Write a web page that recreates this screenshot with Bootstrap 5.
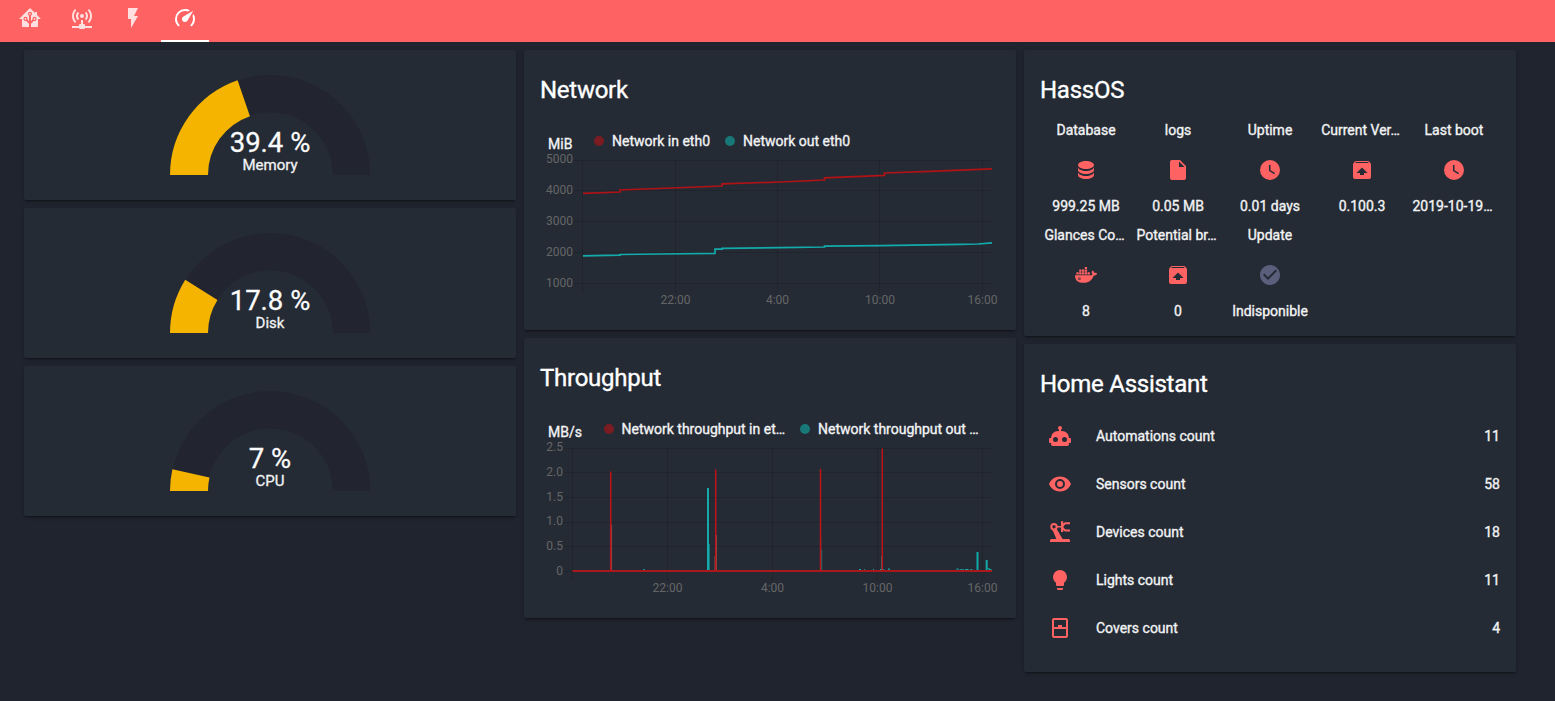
<!DOCTYPE html>
<html lang="en">
<head>
<meta charset="utf-8">
<meta name="viewport" content="width=device-width, initial-scale=1">
<title>System monitor</title>
<link href="https://cdn.jsdelivr.net/npm/bootstrap@5.3.0/dist/css/bootstrap.min.css" rel="stylesheet">
<style>
body{background:#20242f;color:#f2f3f4;font:400 14px/20px Roboto,"Noto Sans",sans-serif;min-height:701px;-webkit-text-stroke:.35px currentColor}
.topbar{height:42px;background:#ff6262;padding-left:4.4px}
.tab{width:51.65px;height:42px;color:#fff;padding:6px 1.5px 0}
.tab svg{opacity:.8}
.tab.active svg{opacity:1}
.tab .bar{height:2px;width:100%;background:transparent}
.tab.active .bar{background:#fff}
svg{display:block;fill:currentColor}
.views{padding:8px 39px 0 24px}
.colm{width:492px}
.panel{background:#252b35;border-radius:2px;box-shadow:0 2px 2px rgba(0,0,0,.14),0 1px 5px rgba(0,0,0,.12),0 3px 1px -2px rgba(0,0,0,.2)}
.panel h2{font-size:24px;line-height:40px;font-weight:400;margin:0;padding:20px 16px 0;color:#fff;letter-spacing:-.26px}
.gauge-panel{height:150px;padding-top:25px}
.gauge-panel text{stroke:currentColor;stroke-width:.3px;-webkit-text-stroke:0}
.chart-panel{height:280px}
.chart-panel svg text{font-size:12px;fill:#666;stroke:none;-webkit-text-stroke:0}
.legend-row{height:20px;margin-top:21px;padding-left:24px}
.legend-row .unit{position:relative;top:3px}
.dot{width:10px;height:10px;border-radius:50%}
.tile{width:92px}
.tile svg{margin:10px auto 6px}
.cut{padding-right:3px}
.accent{color:#ff6262}
.off{color:#5c5f7b}
.entity{height:48px;padding-left:8px}
.grid-line{stroke:#000;stroke-opacity:.15;stroke-width:1}
</style>
</head>
<body>
<svg width="0" height="0" class="position-absolute" aria-hidden="true">
<symbol id="clock" viewBox="0 0 24 24"><path d="M12,2A10,10 0 0,0 2,12A10,10 0 0,0 12,22A10,10 0 0,0 22,12A10,10 0 0,0 12,2M16.2,16.2L11,13V7H12.5V12.2L17,14.9L16.2,16.2Z"/></symbol>
<symbol id="package" viewBox="0 0 24 24"><path d="M20.54,5.23C20.83,5.57 21,6 21,6.5V19A2,2 0 0,1 19,21H5A2,2 0 0,1 3,19V6.5C3,6 3.17,5.57 3.46,5.23L4.84,3.55C5.12,3.21 5.53,3 6,3H18C18.47,3 18.88,3.21 19.15,3.55L20.54,5.23M5.12,5H18.87L17.93,4H5.93L5.12,5M12,9.5L6.5,15H10V17H14V15H17.5L12,9.5Z"/></symbol>
</svg>

<nav class="topbar d-flex">
  <div class="tab d-flex flex-column align-items-center justify-content-between"><svg width="24" height="24" viewBox="0 0 24 24"><path d="M21.8,13H20V21H13V17.67L15.79,14.88L16.5,15C17.66,15 18.6,14.06 18.6,12.9C18.6,11.74 17.66,10.8 16.5,10.8A2.1,2.1 0 0,0 14.4,12.9L14.5,13.61L13,15.13V9.65C13.66,9.29 14.1,8.6 14.1,7.8A2.1,2.1 0 0,0 12,5.7A2.1,2.1 0 0,0 9.9,7.8C9.9,8.6 10.34,9.29 11,9.65V15.13L9.5,13.61L9.6,12.9A2.1,2.1 0 0,0 7.5,10.8A2.1,2.1 0 0,0 5.4,12.9A2.1,2.1 0 0,0 7.5,15L8.21,14.88L11,17.67V21H4V13H2.25C1.83,13 1.42,13 1.42,12.79C1.43,12.57 1.85,12.15 2.28,11.72L11,3C11.33,2.67 11.67,2.33 12,2.33C12.33,2.33 12.67,2.67 13,3L17,7V6H19V9L21.78,11.78C22.18,12.18 22.59,12.59 22.6,12.8C22.6,13 22.2,13 21.8,13M7.5,12A0.9,0.9 0 0,1 8.4,12.9A0.9,0.9 0 0,1 7.5,13.8A0.9,0.9 0 0,1 6.6,12.9A0.9,0.9 0 0,1 7.5,12M16.5,12C17,12 17.4,12.4 17.4,12.9C17.4,13.4 17,13.8 16.5,13.8A0.9,0.9 0 0,1 15.6,12.9A0.9,0.9 0 0,1 16.5,12M12,6.9C12.5,6.9 12.9,7.3 12.9,7.8C12.9,8.3 12.5,8.7 12,8.7C11.5,8.7 11.1,8.3 11.1,7.8C11.1,7.3 11.5,6.9 12,6.9Z"/></svg><span class="bar"></span></div>
  <div class="tab d-flex flex-column align-items-center justify-content-between"><svg width="24" height="24" viewBox="0 0 24 24"><path d="M4.93,2.93C3.12,4.74 2,7.24 2,10C2,12.76 3.12,15.26 4.93,17.07L6.34,15.66C4.89,14.22 4,12.22 4,10C4,7.79 4.89,5.78 6.34,4.34L4.93,2.93M19.07,2.93L17.66,4.34C19.11,5.78 20,7.79 20,10C20,12.22 19.11,14.22 17.66,15.66L19.07,17.07C20.88,15.26 22,12.76 22,10C22,7.24 20.88,4.74 19.07,2.93M7.76,5.76C6.67,6.85 6,8.35 6,10C6,11.65 6.67,13.15 7.76,14.24L9.17,12.83C8.45,12.11 8,11.11 8,10C8,8.89 8.45,7.89 9.17,7.17L7.76,5.76M16.24,5.76L14.83,7.17C15.55,7.89 16,8.89 16,10C16,11.11 15.55,12.11 14.83,12.83L16.24,14.24C17.33,13.15 18,11.65 18,10C18,8.35 17.33,6.85 16.24,5.76M12,8A2,2 0 0,0 10,10A2,2 0 0,0 12,12A2,2 0 0,0 14,10A2,2 0 0,0 12,8M11,14V18H10A1,1 0 0,0 9,19V20H2V22H9A1,1 0 0,0 10,23H14A1,1 0 0,0 15,22H22V20H15V19A1,1 0 0,0 14,18H13V14H11Z"/></svg><span class="bar"></span></div>
  <div class="tab d-flex flex-column align-items-center justify-content-between"><svg width="24" height="24" viewBox="0 0 24 24"><path d="M7,2V13H10V22L17,10H13L17,2H7Z"/></svg><span class="bar"></span></div>
  <div class="tab active d-flex flex-column align-items-center justify-content-between"><svg width="24" height="24" viewBox="0 0 24 24"><path d="M12,16A3,3 0 0,1 9,13C9,11.88 9.61,10.9 10.5,10.39L20.21,4.77L14.68,14.35C14.18,15.33 13.17,16 12,16M12,3C13.81,3 15.5,3.5 16.97,4.32L14.87,5.53C14,5.19 13,5 12,5A8,8 0 0,0 4,13C4,15.21 4.89,17.21 6.34,18.65H6.35C6.74,19.04 6.74,19.67 6.35,20.06C5.96,20.45 5.32,20.45 4.93,20.07V20.07C3.12,18.26 2,15.76 2,13A10,10 0 0,1 12,3M22,13C22,15.76 20.88,18.26 19.07,20.07V20.07C18.68,20.45 18.05,20.45 17.66,20.06C17.27,19.67 17.27,19.04 17.66,18.65V18.65C19.11,17.2 20,15.21 20,13C20,12 19.81,11 19.46,10.1L20.67,8C21.5,9.5 22,11.18 22,13Z"/></svg><span class="bar"></span></div>
</nav>

<main class="views d-flex gap-2 align-items-start">
  <section class="colm d-flex flex-column gap-2">
    <div class="panel gauge-panel">
      <svg class="mx-auto" width="200" height="110" viewBox="0 0 200 110" text-anchor="middle">
        <path d="M19 100A81 81 0 0 1 181.5 100" fill="none" stroke="#22252f" stroke-width="37.5"/>
        <path d="M19 100A81.25 81.25 0 0 1 181.5 100" fill="none" stroke="#f4b400" stroke-width="38" pathLength="100" stroke-dasharray="39.4 200"/>
        <text x="100" y="77" font-size="27.5" fill="#fff">39.4 %</text><text x="100" y="95" font-size="15">Memory</text>
      </svg>
    </div>
    <div class="panel gauge-panel">
      <svg class="mx-auto" width="200" height="110" viewBox="0 0 200 110" text-anchor="middle">
        <path d="M19 100A81 81 0 0 1 181.5 100" fill="none" stroke="#22252f" stroke-width="37.5"/>
        <path d="M19 100A81.25 81.25 0 0 1 181.5 100" fill="none" stroke="#f4b400" stroke-width="38" pathLength="100" stroke-dasharray="17.8 200"/>
        <text x="100" y="77" font-size="27.5" fill="#fff">17.8 %</text><text x="100" y="95" font-size="15">Disk</text>
      </svg>
    </div>
    <div class="panel gauge-panel">
      <svg class="mx-auto" width="200" height="110" viewBox="0 0 200 110" text-anchor="middle">
        <path d="M19 100A81 81 0 0 1 181.5 100" fill="none" stroke="#22252f" stroke-width="37.5"/>
        <path d="M19 100A81.25 81.25 0 0 1 181.5 100" fill="none" stroke="#f4b400" stroke-width="38" pathLength="100" stroke-dasharray="7 200"/>
        <text x="100" y="77" font-size="27.5" fill="#fff">7 %</text><text x="100" y="95" font-size="15">CPU</text>
      </svg>
    </div>
  </section>

  <section class="colm d-flex flex-column gap-2">
    <div class="panel chart-panel">
      <h2>Network</h2>
      <div class="legend-row d-flex align-items-center">
        <span class="unit" style="width:46px">MiB</span>
        <span class="dot" style="background:#7b1c22"></span><span style="width:113px;padding-left:8px;margin-right:8px">Network in eth0</span>
        <span class="dot" style="background:#187878"></span><span style="padding-left:8px">Network out eth0</span>
      </div>
      <svg width="492" height="179" viewBox="524 151 492 179">
        <path class="grid-line" fill="none" d="M573 160.5H992M573 190.5H992M573 221.5H992M573 252.5H992M573 283.5H992M582.5 160V293M675.5 160V293M777.5 160V293M879.5 160V293M982.5 160V293"/>
        <g text-anchor="end"><text x="573" y="163">5000</text><text x="573" y="194">4000</text><text x="573" y="225">3000</text><text x="573" y="256">2000</text><text x="573" y="287">1000</text></g>
        <g text-anchor="middle"><text x="675.5" y="304">22:00</text><text x="777.5" y="304">4:00</text><text x="880" y="304">10:00</text><text x="982.5" y="304">16:00</text></g>
        <g fill="none" stroke-width="1.7">
          <path stroke="#b01216" d="M583 193.3L620 192V190L722 186V183.8L780 182L824.5 180V177.8L884.5 175.4V173L930 171.3L992 168.8"/>
          <path stroke="#13aaaa" d="M583 255.8L620 255.2V254.5L660 254L715 253.4V249.2H722V248.3L780 247.6L824.5 247V246.2L880 245.6L960 244.4L978 244L992 242.9"/>
        </g>
      </svg>
    </div>
    <div class="panel chart-panel">
      <h2>Throughput</h2>
      <div class="legend-row d-flex align-items-center">
        <span class="unit" style="width:56px">MB/s</span>
        <span class="dot" style="background:#7b1c22"></span><span style="width:178px;padding-left:7.5px;margin-right:8px">Network throughput in et…</span>
        <span class="dot" style="background:#187878"></span><span style="padding-left:8px">Network throughput out …</span>
      </div>
      <svg width="492" height="179" viewBox="524 439 492 179">
        <path class="grid-line" fill="none" d="M563 448.5H992M563 472.5H992M563 497.5H992M563 522.5H992M563 546.5H992M563 571.5H992M572.5 448V581M667.5 448V581M772.5 448V581M877.5 448V581M982.5 448V581"/>
        <g text-anchor="end"><text x="563" y="451">2.5</text><text x="563" y="476">2.0</text><text x="563" y="501">1.5</text><text x="563" y="525">1.0</text><text x="563" y="550">0.5</text><text x="563" y="575">0</text></g>
        <g text-anchor="middle"><text x="667.5" y="592">22:00</text><text x="772.5" y="592">4:00</text><text x="877.5" y="592">10:00</text><text x="982.5" y="592">16:00</text></g>
        <g fill="none" stroke-width="1.5">
          <path stroke="#76615a" stroke-width="1" d="M611.6 571V525M716.5 571V535M820.7 571V538M715 571V556"/>
          <path stroke="#187878" stroke-width="1" d="M709.5 571V544M821.7 571V550M881.5 571V556"/>
          <path stroke="#13aaaa" stroke-width="2" d="M708 571V488M977.5 571V552M986.7 571V560"/>
          <path stroke="#13aaaa" stroke-width="1.2" d="M643 569.8H645M859 569.5H861M864 569.8H865M873 569.5H874M880 569.5H884M888 569.2H890M956.5 569.2H958.5M959.5 569.8H964M965 569.5H968.5M970 569.8H972.5M988 568.6H989.5M989 569.5H991.5"/>
          <path stroke="#c01216" d="M610.7 571V471.5M715.7 571V469.5M820.5 571V469M882.3 571V448.5"/>
          <path stroke="#ab181c" stroke-width="2" d="M572.5 571H992"/>
        </g>
      </svg>
    </div>
  </section>

  <section class="colm d-flex flex-column gap-2">
    <div class="panel" style="height:286px">
      <h2>HassOS</h2>
      <div class="d-flex flex-wrap px-3 text-center" style="padding-top:10px;row-gap:9px">
        <div class="tile"><div>Database</div><svg class="accent" width="24" height="40" viewBox="0 -8 24 40"><path d="M12,3C7.58,3 4,4.79 4,7C4,9.21 7.58,11 12,11C16.42,11 20,9.21 20,7C20,4.79 16.42,3 12,3M4,9V12C4,14.21 7.58,16 12,16C16.42,16 20,14.21 20,12V9C20,11.21 16.42,13 12,13C7.58,13 4,11.21 4,9M4,14V17C4,19.21 7.58,21 12,21C16.42,21 20,19.21 20,17V14C20,16.21 16.42,18 12,18C7.58,18 4,16.21 4,14Z"/></svg><div>999.25 MB</div></div>
        <div class="tile"><div>logs</div><svg class="accent" width="24" height="40" viewBox="0 -8 24 40"><path d="M13,9V3.5L18.5,9M6,2C4.89,2 4,2.89 4,4V20A2,2 0 0,0 6,22H18A2,2 0 0,0 20,20V8L14,2H6Z"/></svg><div>0.05 MB</div></div>
        <div class="tile"><div>Uptime</div><svg class="accent" width="24" height="40" viewBox="0 -8 24 40"><use href="#clock" width="24" height="24"/></svg><div>0.01 days</div></div>
        <div class="tile"><div class="cut">Current Ver…</div><svg class="accent" width="24" height="40" viewBox="0 -8 24 40"><use href="#package" width="24" height="24"/></svg><div>0.100.3</div></div>
        <div class="tile"><div>Last boot</div><svg class="accent" width="24" height="40" viewBox="0 -8 24 40"><use href="#clock" width="24" height="24"/></svg><div class="cut">2019-10-19…</div></div>
        <div class="tile"><div class="cut">Glances Co…</div><svg class="accent" width="24" height="40" viewBox="0 -8 24 40"><path fill-rule="evenodd" d="M1 12.2H16.8C17.8 12.2 18.2 11.8 18.4 11.2C17.5 10 17.4 8.6 18.4 7.4C19.6 8 20.2 8.9 20.3 10C21.4 9.7 22.5 9.9 23.2 10.4C22.6 11.8 21.4 12.4 19.8 12.5C18.2 17 15.2 19.8 9.6 19.8C4 19.8 .9 17.3 1 12.2ZM5.4 14.6A1.2 1.2 0 1 0 5.4 17A1.2 1.2 0 1 0 5.4 14.6Z"/><path d="M2.4 9.3H4.7V11.6H2.4zM5.2 9.3H7.5V11.6H5.2zM8 9.3H10.3V11.6H8zM10.8 9.3H13.1V11.6H10.8zM13.6 9.3H15.9V11.6H13.6zM5.2 6.6H7.5V8.8H5.2zM8 6.6H10.3V8.8H8zM10.8 6.6H13.1V8.8H10.8zM10.8 4H13.1V6.1H10.8z"/><circle cx="5.4" cy="15.8" r=".6"/></svg><div>8</div></div>
        <div class="tile"><div class="cut">Potential br…</div><svg class="accent" width="24" height="40" viewBox="0 -8 24 40"><use href="#package" width="24" height="24"/></svg><div>0</div></div>
        <div class="tile"><div>Update</div><svg class="off" width="24" height="40" viewBox="0 -8 24 40"><path d="M12 2C6.5 2 2 6.5 2 12S6.5 22 12 22 22 17.5 22 12 17.5 2 12 2M10 17L5 12L6.41 10.59L10 14.17L17.59 6.58L19 8L10 17Z"/></svg><div>Indisponible</div></div>
      </div>
    </div>
    <div class="panel" style="height:328px">
      <h2>Home Assistant</h2>
      <div class="px-3" style="padding-top:8px">
        <div class="entity d-flex align-items-center"><svg class="accent" width="24" height="24" viewBox="0 0 24 24"><path d="M12,2A2,2 0 0,1 14,4C14,4.74 13.6,5.39 13,5.73V7H14A7,7 0 0,1 21,14H22A1,1 0 0,1 23,15V18A1,1 0 0,1 22,19H21V20A2,2 0 0,1 19,22H5A2,2 0 0,1 3,20V19H2A1,1 0 0,1 1,18V15A1,1 0 0,1 2,14H3A7,7 0 0,1 10,7H11V5.73C10.4,5.39 10,4.74 10,4A2,2 0 0,1 12,2M7.5,13A2.5,2.5 0 0,0 5,15.5A2.5,2.5 0 0,0 7.5,18A2.5,2.5 0 0,0 10,15.5A2.5,2.5 0 0,0 7.5,13M16.5,13A2.5,2.5 0 0,0 14,15.5A2.5,2.5 0 0,0 16.5,18A2.5,2.5 0 0,0 19,15.5A2.5,2.5 0 0,0 16.5,13Z"/></svg><span class="ms-4">Automations count</span><span class="ms-auto">11</span></div>
        <div class="entity d-flex align-items-center"><svg class="accent" width="24" height="24" viewBox="0 0 24 24"><path d="M12,9A3,3 0 0,0 9,12A3,3 0 0,0 12,15A3,3 0 0,0 15,12A3,3 0 0,0 12,9M12,17A5,5 0 0,1 7,12A5,5 0 0,1 12,7A5,5 0 0,1 17,12A5,5 0 0,1 12,17M12,4.5C7,4.5 2.73,7.61 1,12C2.73,16.39 7,19.5 12,19.5C17,19.5 21.27,16.39 23,12C21.27,7.61 17,4.5 12,4.5Z"/></svg><span class="ms-4">Sensors count</span><span class="ms-auto">58</span></div>
        <div class="entity d-flex align-items-center"><svg class="accent" width="24" height="24" viewBox="0 0 24 24"><path fill-rule="evenodd" d="M6 3A3.7 3.7 0 1 0 6 10.4A3.7 3.7 0 1 0 6 3ZM6 5A1.7 1.7 0 1 1 6 8.4A1.7 1.7 0 1 1 6 5Z"/><path d="M4.3 9.5L8.4 19H3.5C2.5 19 2 19.8 2 20.5V22H22V20.5C22 19.6 21.4 19 20.5 19H14.6L8.4 8.5ZM9 6H13V1.3H15.2V3.6L17 2.3H22V4.3H17.6L15.6 6V7.8L17.6 9.5H22V11.4H17L15.2 10V12H13V7.6H9Z"/></svg><span class="ms-4">Devices count</span><span class="ms-auto">18</span></div>
        <div class="entity d-flex align-items-center"><svg class="accent" width="24" height="24" viewBox="0 0 24 24"><path d="M12,2A7,7 0 0,0 5,9C5,11.38 6.19,13.47 8,14.74V17A1,1 0 0,0 9,18H15A1,1 0 0,0 16,17V14.74C17.81,13.47 19,11.38 19,9A7,7 0 0,0 12,2M9,21A1,1 0 0,0 10,22H14A1,1 0 0,0 15,21V20H9V21Z"/></svg><span class="ms-4">Lights count</span><span class="ms-auto">11</span></div>
        <div class="entity d-flex align-items-center"><svg class="accent" width="24" height="24" viewBox="0 0 24 24"><path d="M6,11H10V9H14V11H18V4H6V11M18,13H6V20H18V13M6,2H18A2,2 0 0,1 20,4V20A2,2 0 0,1 18,22H6A2,2 0 0,1 4,20V4A2,2 0 0,1 6,2Z"/></svg><span class="ms-4">Covers count</span><span class="ms-auto">4</span></div>
      </div>
    </div>
  </section>
</main>
<script src="https://cdn.jsdelivr.net/npm/bootstrap@5.3.0/dist/js/bootstrap.bundle.min.js"></script>
</body>
</html>
